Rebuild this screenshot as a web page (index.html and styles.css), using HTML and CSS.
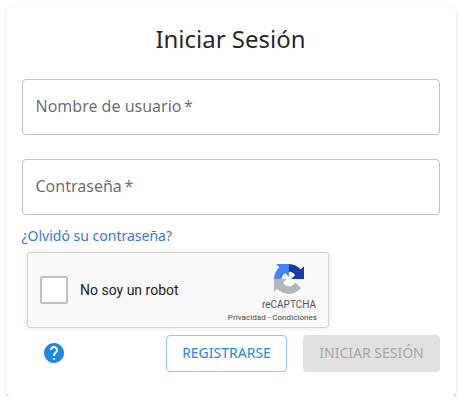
FILE: index.html
```html
<!DOCTYPE html>
<html lang="es">
<head>
<meta charset="utf-8">
<title>Iniciar Sesión</title>
<link rel="stylesheet" href="styles.css">
</head>
<body>
<main class="card">
  <h1 class="title">Iniciar Sesión</h1>
  <div class="field"><span>Nombre de usuario&#8201;*</span></div>
  <div class="field"><span>Contraseña&#8201;*</span></div>
  <a class="forgot">¿Olvidó su contraseña?</a>
  <section class="captcha">
    <span class="checkbox"></span>
    <span class="robot">No soy un robot</span>
    <div class="brand">
      <svg class="logo" viewBox="0 0 64 64">
        <path fill="#1c3aa9" d="M64 31.955l-.033-1.37V4.687l-7.16 7.16C50.948 4.674 42.033.093 32.05.093c-10.4 0-19.622 4.96-25.458 12.64l11.736 11.86a15.55 15.55 0 0 1 4.754-5.334c2.05-1.6 4.952-2.906 8.968-2.906.485 0 .86.057 1.135.163 4.976.393 9.288 3.14 11.828 7.124l-8.307 8.307L64 31.953"/>
        <path fill="#4285f4" d="M31.862.094l-1.37.033H4.594l7.16 7.16C4.58 13.147 0 22.06 0 32.046c0 10.4 4.96 19.622 12.64 25.458L24.5 45.768a15.55 15.55 0 0 1-5.334-4.754c-1.6-2.05-2.906-4.952-2.906-8.968 0-.485.057-.86.163-1.135.393-4.976 3.14-9.288 7.124-11.828l8.307 8.307L31.86.095"/>
        <path fill="#b5b5b5" d="M.001 32.045l.033 1.37v25.898l7.16-7.16c5.86 7.173 14.774 11.754 24.76 11.754 10.4 0 19.622-4.96 25.458-12.64l-11.736-11.86a15.55 15.55 0 0 1-4.754 5.334c-2.05 1.6-4.952 2.906-8.968 2.906-.485 0-.86-.057-1.135-.163-4.976-.393-9.288-3.14-11.828-7.124l8.307-8.307c-10.522.04-22.4.066-27.295-.005"/>
      </svg>
      <span class="name">reCAPTCHA</span>
      <span class="terms">Privacidad - Condiciones</span>
    </div>
  </section>
  <div class="actions">
    <svg class="help" viewBox="0 0 24 24"><path fill="#1e88e5" d="M12 2C6.48 2 2 6.48 2 12s4.48 10 10 10 10-4.48 10-10S17.52 2 12 2zm1 17h-2v-2h2v2zm2.07-7.75l-.9.92C13.45 12.9 13 13.5 13 15h-2v-.5c0-1.1.45-2.1 1.17-2.83l1.24-1.26c.37-.36.59-.86.59-1.41 0-1.1-.9-2-2-2s-2 .9-2 2H8c0-2.21 1.79-4 4-4s4 1.79 4 4c0 .88-.36 1.68-.93 2.25z"/></svg>
    <button class="btn register">REGISTRARSE</button>
    <button class="btn login" disabled>INICIAR SESIÓN</button>
  </div>
</main>
</body>
</html>
```
FILE: styles.css
```css
* { box-sizing: border-box; }
body {
  margin: 0;
  padding: 7px 0 0 6px;
  background: #fff;
  font-family: "Noto Sans", sans-serif;
}
.card {
  width: 450px;
  height: 389px;
  padding: 16px;
  border-radius: 4px;
  background: #fff;
  box-shadow: 0 1px 0 0 rgba(0,0,0,.22), 0 1px 1px 0 rgba(0,0,0,.08), 0 1px 3px 0 rgba(0,0,0,.12);
}
.title {
  margin: 0 0 24px;
  height: 32px;
  font-size: 24px;
  line-height: 32px;
  font-weight: 400;
  text-align: center;
  text-indent: -1px;
  color: rgba(0,0,0,.87);
}
.field {
  display: flex;
  align-items: center;
  height: 56px;
  margin-bottom: 24px;
  padding: 0 0 2px 12.5px;
  border: 1px solid #c1c1c1;
  border-radius: 4px;
  font-size: 16px;
  line-height: 23px;
  color: rgba(0,0,0,.6);
}
.field + .field { margin-bottom: 10px; }
.forgot {
  display: block;
  height: 22px;
  font-size: 14px;
  line-height: 22px;
  text-indent: -0.5px;
  color: #3577df;
}
.captcha {
  display: flex;
  align-items: center;
  width: 302px;
  height: 76px;
  margin: 5px 0 7px 5px;
  padding-left: 12px;
  border: 1px solid #d3d3d3;
  border-radius: 3px;
  background: #f9f9f9;
  box-shadow: 0 0 4px 1px rgba(0,0,0,.08);
  font-family: Roboto, sans-serif;
}
.checkbox {
  width: 28px;
  height: 28px;
  margin-right: 12px;
  border: 2px solid #c1c1c1;
  border-radius: 2px;
  background: #fff;
}
.robot { font-size: 14px; line-height: 17px; color: #222; }
.brand {
  display: flex;
  flex-direction: column;
  align-items: flex-end;
  align-self: stretch;
  margin-left: auto;
  padding: 11px 11px 0 0;
  color: #555;
  white-space: nowrap;
}
.logo { width: 30px; height: 30px; margin: 0 13px 5px 0; }
.name { margin-right: 1px; font-size: 10px; line-height: 12px; }
.terms { font-size: 8px; line-height: 13px; letter-spacing: .06px; color: #444; }
.actions { display: flex; align-items: flex-start; height: 37px; }
.help { width: 24px; height: 24px; margin: 6px auto 0 20px; }
.btn {
  height: 37px;
  padding: 0;
  border-radius: 4px;
  font-family: "Noto Sans", sans-serif;
  font-size: 14px;
  line-height: 24px;
}
.register {
  width: 121px;
  margin-right: 16px;
  padding-bottom: 1px;
  border: 1px solid #8fc4f2;
  background: #fff;
  color: #1e88e5;
}
.login {
  width: 137px;
  padding-bottom: 1px;
  border: 0;
  background: #e0e0e0;
  color: #a6a6a6;
}
```
